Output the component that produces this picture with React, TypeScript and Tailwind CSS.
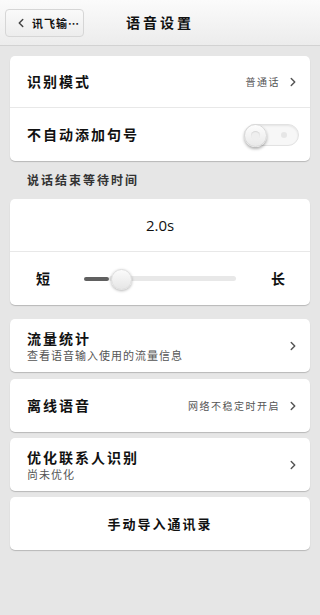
import { ChevronLeft, ChevronRight } from 'lucide-react';

const font = { fontFamily: '"Noto Sans CJK SC", "Noto Sans", sans-serif' };

function Chevron() {
    return <ChevronRight className="h-3.5 w-3.5 text-[#555]" strokeWidth={2.5} />;
}

export default function App() {
    return (
        <div
            className="relative h-[615px] w-[320px] overflow-hidden bg-[#e6e6e6] text-[#111]"
            style={font}
        >
            {/* Header */}
            <div className="relative flex h-[46px] items-center justify-center border-b border-[#d2d2d2] bg-gradient-to-b from-[#fbfbfb] to-[#ececec]">
                <div className="absolute left-[5px] top-[9px] flex h-[28px] w-[79px] items-center gap-1 rounded-[4px] border border-[#d6d6d6] bg-gradient-to-b from-[#fafafa] to-[#ededed] pl-2 text-[11px] font-bold">
                    <ChevronLeft className="h-3.5 w-3.5 text-[#444]" strokeWidth={2.5} />
                    <span className="tracking-[1px]">讯飞输…</span>
                </div>
                <span className="text-[14px] font-bold tracking-[3px]">语音设置</span>
            </div>

            <div className="flex flex-col px-[10px] pt-[10px]">
                {/* Card 1 */}
                <div className="rounded-[5px] bg-white shadow-[0_1px_1px_rgba(0,0,0,0.2)]">
                    <div className="flex h-[52px] items-center justify-between border-b border-[#e8e8e8] pl-[17px] pr-[10px]">
                        <span className="text-[14px] font-bold tracking-[2px]">识别模式</span>
                        <div className="flex items-center gap-[6px] text-[10px] text-[#555]">
                            <span className="tracking-[1.5px]">普通话</span>
                            <Chevron />
                        </div>
                    </div>
                    <div className="flex h-[53px] items-center justify-between pl-[17px] pr-[11px]">
                        <span className="text-[14px] font-bold tracking-[2px]">不自动添加句号</span>
                        <div className="relative h-[22px] w-[55px] rounded-full border border-[#e2e2e2] bg-[#f7f7f7] shadow-[inset_0_1px_2px_rgba(0,0,0,0.08)]">
                            <div className="absolute right-[11px] top-[7px] h-[6px] w-[6px] rounded-full bg-[#e6e6e6]" />
                            <div className="absolute -left-[1px] -top-[1px] flex h-[23px] w-[23px] items-center justify-center rounded-full border border-[#d8d8d8] bg-gradient-to-b from-[#fdfdfd] to-[#e9e9e9] shadow-[0_2px_3px_rgba(0,0,0,0.3)]">
                                <div className="h-[9px] w-[9px] rounded-full bg-[#efefef] shadow-[inset_0_1px_1px_rgba(0,0,0,0.1)]" />
                            </div>
                        </div>
                    </div>
                </div>

                {/* Section label */}
                <div className="flex h-[38px] items-center pl-[17px] text-[12px] font-bold tracking-[2px] text-[#333]">
                    说话结束等待时间
                </div>

                {/* Card 2 */}
                <div className="rounded-[5px] bg-white shadow-[0_1px_1px_rgba(0,0,0,0.2)]">
                    <div className="flex h-[53px] items-center justify-center border-b border-[#e8e8e8] text-[15px]" style={{ fontFamily: '"Open Sans", sans-serif' }}>
                        2.0s
                    </div>
                    <div className="flex h-[53px] items-center pl-[26px] pr-[25px]">
                        <span className="text-[14px] font-bold">短</span>
                        <div className="relative ml-[34px] flex h-[20px] w-[152px] items-center">
                            <div className="h-[4px] w-[25px] rounded-full bg-[#606060]" />
                            <div className="h-[5px] flex-1 rounded-full bg-[#e8e8e8]" />
                            <div className="absolute left-[27px] top-0 h-[21px] w-[21px] rounded-full border border-[#dcdcdc] bg-gradient-to-b from-[#fbfbfb] to-[#e6e6e6] shadow-[0_1px_3px_rgba(0,0,0,0.3)]" />
                        </div>
                        <span className="ml-auto text-[14px] font-bold">长</span>
                    </div>
                </div>

                {/* Card 3 */}
                <div className="mt-[14px] flex h-[53px] items-center justify-between rounded-[5px] bg-white pl-[17px] pr-[10px] shadow-[0_1px_1px_rgba(0,0,0,0.2)]">
                    <div className="flex flex-col">
                        <span className="text-[14px] font-bold leading-[18px] tracking-[2px]">流量统计</span>
                        <span className="text-[11px] leading-[16px] tracking-[1px] text-[#555]">查看语音输入使用的流量信息</span>
                    </div>
                    <Chevron />
                </div>

                {/* Card 4 */}
                <div className="mt-[7px] flex h-[53px] items-center justify-between rounded-[5px] bg-white pl-[17px] pr-[10px] shadow-[0_1px_1px_rgba(0,0,0,0.2)]">
                    <span className="text-[14px] font-bold tracking-[2px]">离线语音</span>
                    <div className="flex items-center gap-[6px] text-[10px] text-[#555]">
                        <span className="tracking-[1.5px]">网络不稳定时开启</span>
                        <Chevron />
                    </div>
                </div>

                {/* Card 5 */}
                <div className="mt-[6px] flex h-[53px] items-center justify-between rounded-[5px] bg-white pl-[17px] pr-[10px] shadow-[0_1px_1px_rgba(0,0,0,0.2)]">
                    <div className="flex flex-col">
                        <span className="text-[14px] font-bold leading-[18px] tracking-[2px]">优化联系人识别</span>
                        <span className="text-[11px] leading-[16px] tracking-[1px] text-[#555]">尚未优化</span>
                    </div>
                    <Chevron />
                </div>

                {/* Card 6 */}
                <div className="mt-[6px] flex h-[53px] items-center justify-center rounded-[5px] bg-white shadow-[0_1px_1px_rgba(0,0,0,0.2)]">
                    <span className="text-[13px] font-bold tracking-[2px]">手动导入通讯录</span>
                </div>
            </div>
        </div>
    );
}
